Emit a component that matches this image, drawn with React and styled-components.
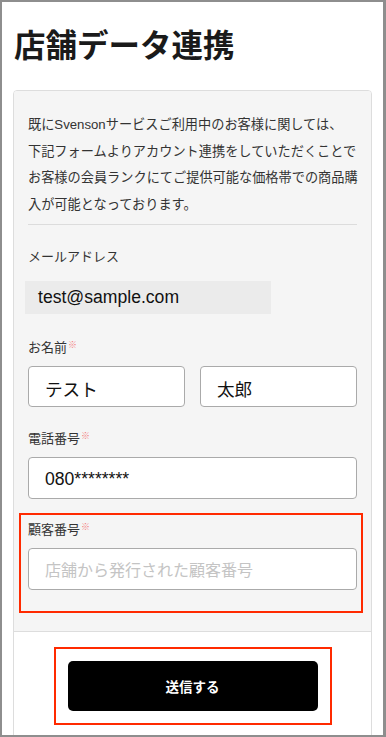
import React from 'react';
import styled, { createGlobalStyle } from 'styled-components';

const GlobalStyle = createGlobalStyle`
  html, body {
    margin: 0;
    padding: 0;
    background: #fff;
  }
  body {
    font-family: "Liberation Sans", "Noto Sans CJK JP", sans-serif;
    color: #222;
  }
`;

const Frame = styled.div`
  width: 386px;
  height: 737px;
  box-sizing: border-box;
  border: 2px solid #8e8e8e;
  border-right-width: 3px;
  padding: 0 11px;
  overflow: hidden;
  background: #fff;
`;

const Title = styled.h1`
  margin: 0 0 24px 1px;
  padding-top: 19px;
  font-family: "Noto Sans CJK JP", sans-serif;
  font-size: 31.5px;
  line-height: 45px;
  font-weight: 700;
  color: #1a1a1a;
`;

const Card = styled.section`
  border: 1px solid #dddddd;
  border-radius: 4px 4px 0 0;
  overflow: hidden;
`;

const CardBody = styled.div`
  background: #f5f5f5;
  padding: 21px 14px 18px;
`;

const Intro = styled.p`
  margin: 0;
  font-size: 13.2px;
  line-height: 26.5px;
  color: #333;
  white-space: nowrap;
`;

const Divider = styled.hr`
  margin: 6px 0 0;
  border: 0;
  border-top: 1px solid #dcdcdc;
`;

const Field = styled.div`
  margin-top: ${p => p.$gap || 22}px;
`;

const Annotated = styled.div`
  margin: 14px -6px 0 -9px;
  border: 2px solid #ff2a00;
  padding: 5px 4px 21px 7px;
`;

const Label = styled.div`
  font-family: "Noto Sans CJK JP", sans-serif;
  font-size: 13px;
  line-height: 18px;
  height: 18px;
  color: #333;
  margin-bottom: 10px;
`;

const Required = styled.span`
  position: relative;
  top: -4px;
  font-size: 9px;
  line-height: 1;
  color: #f47c7c;
  margin-left: 1px;
`;

const StaticValue = styled.div`
  width: 246px;
  height: 33px;
  box-sizing: border-box;
  margin: 16px 0 0 -3px;
  padding-left: 13px;
  display: flex;
  align-items: center;
  background: #ebebeb;
  font-size: 17.6px;
  color: #111;
`;

const Row = styled.div`
  display: grid;
  grid-template-columns: 1fr 1fr;
  gap: 15px;
`;

const Input = styled.input`
  display: block;
  width: 100%;
  height: ${p => p.$h || 42}px;
  box-sizing: border-box;
  margin: 0;
  padding: 3px 16px 0;
  border: 1px solid #aaaaaa;
  border-radius: 4px;
  background: #fff;
  font-family: "Liberation Sans", "Noto Sans CJK JP", sans-serif;
  font-size: 17.6px;
  color: #111;
  outline: none;

  &::placeholder {
    font-family: "Noto Sans CJK JP", sans-serif;
    font-size: 16px;
    color: #c4c4c4;
  }
`;

const Footer = styled.div`
  background: #fff;
  border-top: 1px solid #dddddd;
  padding: 15px 0 30px;
  display: flex;
  justify-content: center;
`;

const ButtonMark = styled.div`
  border: 2px solid #ff2a00;
  padding: 12px;
`;

const SubmitButton = styled.button`
  display: block;
  width: 250px;
  height: 50px;
  border: 0;
  border-radius: 5px;
  background: #000;
  color: #fff;
  font-family: "Noto Sans CJK JP", sans-serif;
  font-size: 13.5px;
  font-weight: 700;
  cursor: pointer;
`;

export default function App() {
  return (
    <>
      <GlobalStyle />
      <Frame>
        <Title>店舗データ連携</Title>
        <Card>
          <CardBody>
            <Intro>
              既にSvensonサービスご利用中のお客様に関しては、<br />
              下記フォームよりアカウント連携をしていただくことで<br />
              お客様の会員ランクにてご提供可能な価格帯での商品購<br />
              入が可能となっております。
            </Intro>
            <Divider />

            <Field>
              <Label>メールアドレス</Label>
              <StaticValue>test@sample.com</StaticValue>
            </Field>

            <Field $gap={24}>
              <Label>お名前<Required>※</Required></Label>
              <Row>
                <Input $h={41} defaultValue="テスト" />
                <Input $h={41} defaultValue="太郎" />
              </Row>
            </Field>

            <Field>
              <Label>電話番号<Required>※</Required></Label>
              <Input defaultValue="080********" />
            </Field>

            <Annotated>
              <Label>顧客番号<Required>※</Required></Label>
              <Input placeholder="店舗から発行された顧客番号" />
            </Annotated>
          </CardBody>
          <Footer>
            <ButtonMark>
              <SubmitButton type="button">送信する</SubmitButton>
            </ButtonMark>
          </Footer>
        </Card>
      </Frame>
    </>
  );
}
